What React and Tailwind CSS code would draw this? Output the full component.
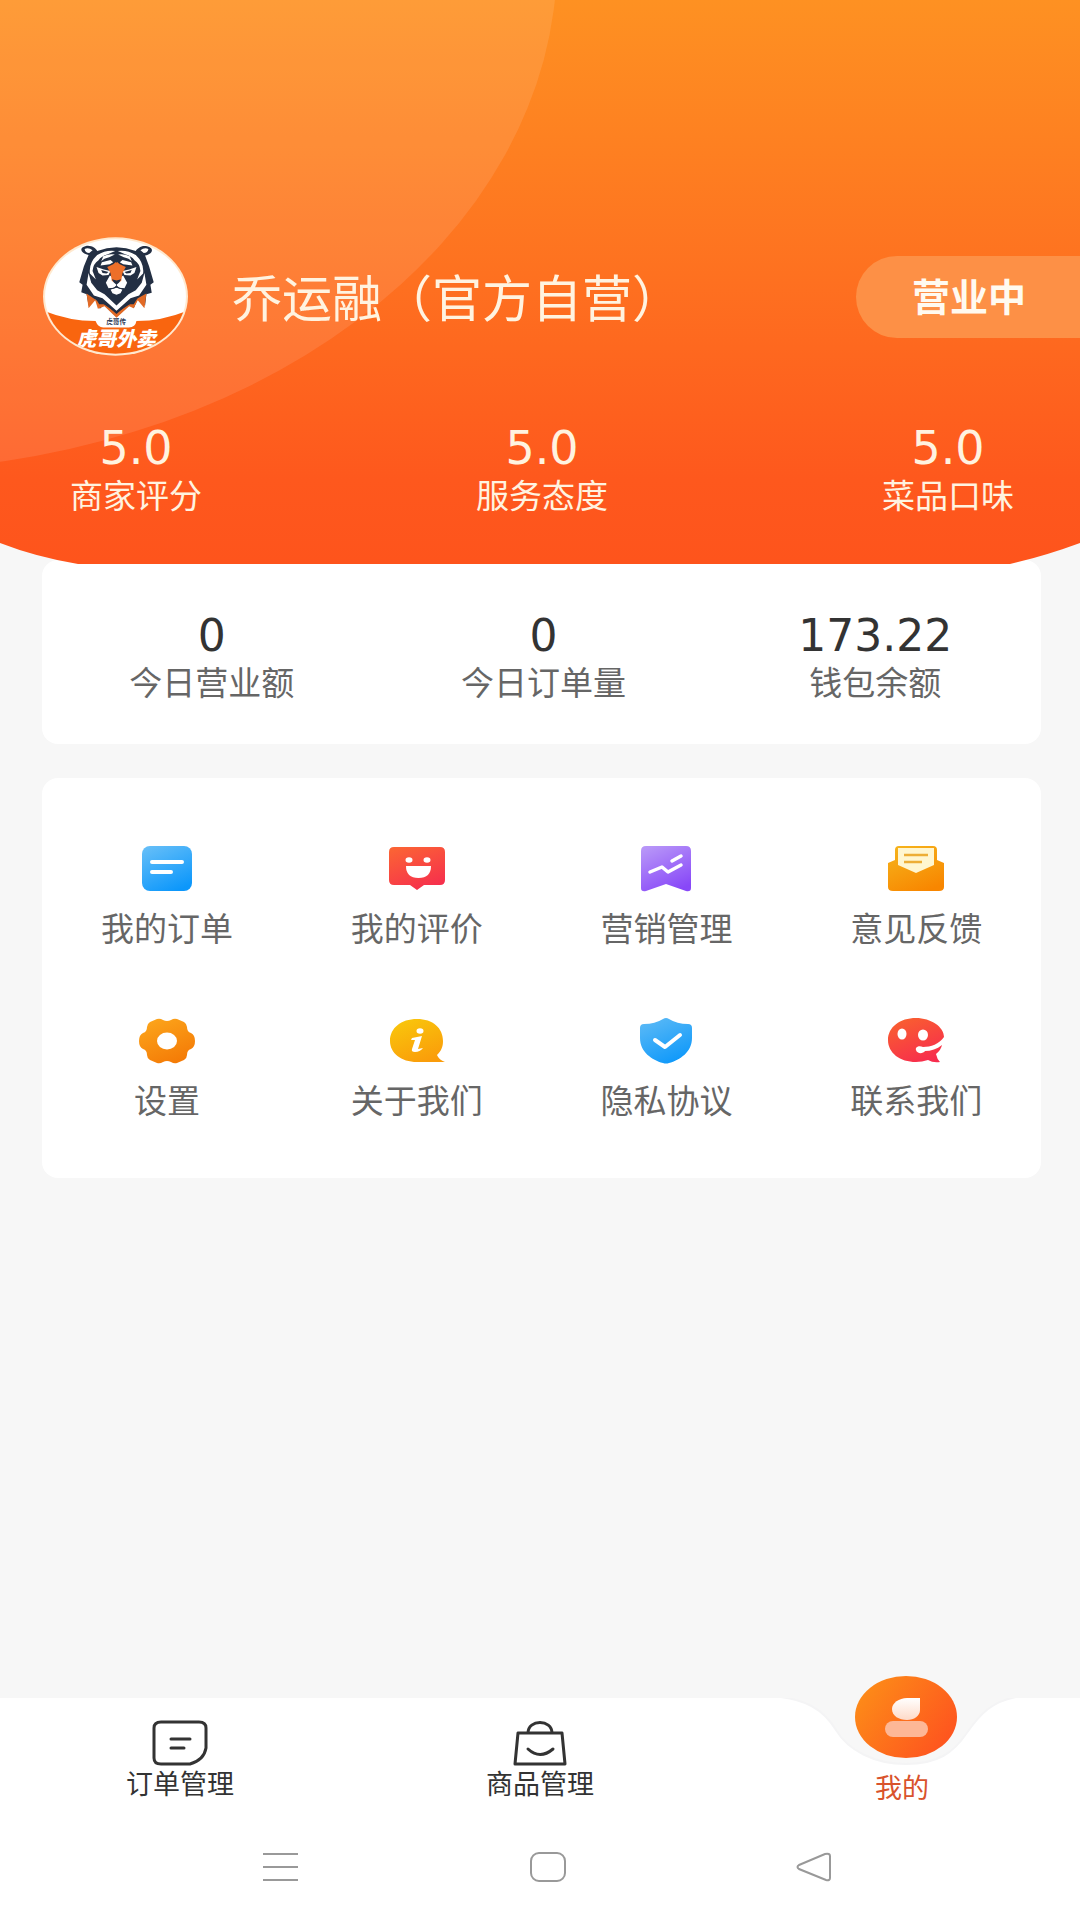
import React, { useState } from "react";

const scores = [
  { label: "商家评分", value: "5.0" },
  { label: "服务态度", value: "5.0" },
  { label: "菜品口味", value: "5.0" },
];

const stats = [
  { label: "今日营业额", value: "0" },
  { label: "今日订单量", value: "0" },
  { label: "钱包余额", value: "173.22" },
];

function Gradient({ id, from, to }) {
  return (
    <defs>
      <linearGradient id={id} x1="0.2" y1="0" x2="0.7" y2="1">
        <stop offset="0" stopColor={from} />
        <stop offset="1" stopColor={to} />
      </linearGradient>
    </defs>
  );
}

function Icon({ children }) {
  return (
    <svg viewBox="0 0 56 46" className="w-14 h-[46px]" aria-hidden="true">
      {children}
    </svg>
  );
}

function OrdersIcon() {
  return (
    <Icon>
      <Gradient id="orders" from="#62bdf8" to="#0c97fb" />
      <rect x="3" y="0" width="50" height="45" rx="8" fill="url(#orders)" />
      <path d="M13 16H43M13 26H32" stroke="#fff" strokeWidth="4" strokeLinecap="round" />
    </Icon>
  );
}

function ReviewIcon() {
  return (
    <Icon>
      <Gradient id="review" from="#fb6235" to="#f62f4d" />
      <path
        d="M5 1H51Q56 1 56 6V34Q56 39 51 39H35L28 44L21 39H5Q0 39 0 34V6Q0 1 5 1Z"
        fill="url(#review)"
      />
      <ellipse cx="20" cy="14" rx="3.5" ry="2.8" fill="#fff" />
      <ellipse cx="38" cy="14" rx="3.5" ry="2.8" fill="#fff" />
      <path d="M17 20H42Q42 32 29.500 32Q17 32 17 20Z" fill="#fff" />
    </Icon>
  );
}

function MarketingIcon() {
  return (
    <Icon>
      <Gradient id="marketing" from="#b795f8" to="#8848f8" />
      <path
        d="M8 0H48Q53 0 53 5V42Q53 46 48 45L28 38L8 45Q3 46 3 42V5Q3 0 8 0Z"
        fill="url(#marketing)"
      />
      <path
        d="M12 26L24 21L30 26L43 19M34 15L43 10"
        fill="none"
        stroke="#fff"
        strokeWidth="3.500"
        strokeLinecap="round"
        strokeLinejoin="round"
      />
    </Icon>
  );
}

function FeedbackIcon() {
  return (
    <Icon>
      <Gradient id="feedback" from="#f6b21a" to="#f88600" />
      <path d="M7 14V4Q7 0 11 0H45Q49 0 49 4V14L56 17V41Q56 45 51 45H5Q0 45 0 41V17Z" fill="url(#feedback)" />
      <path d="M10 2H46V19L28 27L10 19Z" fill="#fff6d0" />
      <path d="M16 9H40M16 16H34" stroke="#edae36" strokeWidth="2.500" />
    </Icon>
  );
}

function SettingsIcon() {
  return (
    <Icon>
      <Gradient id="settings" from="#fca51b" to="#f47a06" />
      <path
        d="M18 1Q21 0 24 2Q28 4 32 2Q35 0 38 1L45 4Q48 6 48 9Q48 14 52 15Q56 17 56 23Q56 29 52 31Q48 32 48 37Q48 40 45 42L38 45Q35 46 32 44Q28 42 24 44Q21 46 18 45L11 42Q8 40 8 37Q8 32 4 31Q0 29 0 23Q0 17 4 15Q8 14 8 9Q8 6 11 4Z"
        fill="url(#settings)"
      />
      <ellipse cx="28" cy="23" rx="10" ry="8.500" fill="#fff" />
    </Icon>
  );
}

function AboutIcon() {
  return (
    <Icon>
      <Gradient id="about" from="#f9c60c" to="#fa9c0a" />
      <path
        d="M28 1C44 1 54 10 54 23C54 29 52 33 48 37Q50 42 56 44H28C12 44 1 35 1 23C1 10 12 1 28 1Z"
        fill="url(#about)"
      />
      <ellipse cx="31" cy="13" rx="3.500" ry="2.800" fill="#fff" />
      <path d="M23 20L33 18L29 31L34 30Q31 34 26 34Q22 34 23 31L26 22L22 22Z" fill="#fff" />
    </Icon>
  );
}

function PrivacyIcon() {
  return (
    <Icon>
      <Gradient id="privacy" from="#5ab9f6" to="#0d98fa" />
      <path
        d="M25 1Q28 -1 31 1Q39 6 50 6Q54 6 54 10V20C54 34 42 42 31 45Q28 46 25 45C14 42 2 34 2 20V10Q2 6 6 6Q17 6 25 1Z"
        fill="url(#privacy)"
      />
      <path
        d="M17 22L27 29L42 17"
        fill="none"
        stroke="#fff"
        strokeWidth="4"
        strokeLinecap="round"
        strokeLinejoin="round"
      />
    </Icon>
  );
}

function ContactIcon() {
  return (
    <Icon>
      <Gradient id="contact" from="#f9602f" to="#f72c4d" />
      <path
        d="M28 0C43 0 56 9 56 19C51 26 43 29 35 29C31 27 27 29 28 32C29 36 35 36 37 33C43 33 49 31 54 27Q53 32 48 36Q49 41 52 44Q45 45 40 42Q34 44 28 44C12 44 0 35 0 22C0 9 12 0 28 0Z"
        fill="url(#contact)"
      />
      <ellipse cx="14" cy="16" rx="4.500" ry="5.500" fill="#fff" />
      <ellipse cx="35" cy="17" rx="5" ry="5.500" fill="#fff" />
    </Icon>
  );
}

const menu = [
  { label: "我的订单", icon: OrdersIcon },
  { label: "我的评价", icon: ReviewIcon },
  { label: "营销管理", icon: MarketingIcon },
  { label: "意见反馈", icon: FeedbackIcon },
  { label: "设置", icon: SettingsIcon },
  { label: "关于我们", icon: AboutIcon },
  { label: "隐私协议", icon: PrivacyIcon },
  { label: "联系我们", icon: ContactIcon },
];

function ShopLogo() {
  return (
    <svg viewBox="65 50 440 358" className="w-[147px] h-[119px] shrink-0" role="img" aria-label="虎哥外卖">
      <defs>
        <clipPath id="logoClip">
          <ellipse cx="285" cy="229" rx="212" ry="172" />
        </clipPath>
      </defs>
      <ellipse cx="285" cy="229" rx="218" ry="178" fill="#ffe9cf" />
      <g clipPath="url(#logoClip)">
        <rect x="65" y="50" width="440" height="358" fill="#fff" />
        <path d="M65 270Q140 302 225 303Q232 322 248 322H325Q345 322 348 303Q430 302 505 270V408H65Z" fill="#f9650f" />
        <text x="287" y="313" textAnchor="middle" fontSize="20" fontWeight="700" fill="#33415a">
          虎哥传
        </text>
        <text x="287" y="378" textAnchor="middle" fontSize="60" fontWeight="900" fontStyle="italic" fill="#fff">
          虎哥外卖
        </text>
      </g>
      <g transform="translate(138 60)">
        <path
          d="M66 44C44 40 34 22 58 17C76 14 88 25 92 32Q150 10 208 32C213 24 225 14 242 18C266 24 258 42 236 46L248 78L262 126L252 134L256 158L240 162L236 196L214 176L202 204L190 194L150 231L112 194L100 206L86 178L66 196L60 162L44 156L48 134L38 126L52 78Z"
          fill="#232f43"
        />
        <path
          d="M60 160L86 178L112 192L150 218L190 192L214 174L240 160L234 204L214 180L202 204L188 198L150 233L114 198L94 206L86 180L66 204Z"
          fill="#e26a25"
        />
        <path d="M82 166L108 176L150 216L192 176L218 166L202 192L184 192L150 222L116 192L98 192Z" fill="#232f43" />
        <path d="M54 26Q66 20 78 30L68 38Q56 38 54 26ZM246 26Q234 20 222 30L232 38Q244 38 246 26Z" fill="#fff" />
        <path
          d="M92 44Q118 28 146 32L124 42Q104 48 96 60Q80 70 78 92L88 118L70 100Q66 68 92 44ZM208 44Q182 28 154 32L176 42Q196 48 204 60Q220 70 222 92L212 118L230 100Q234 68 208 44Z"
          fill="#fff"
        />
        <path
          d="M66 98L74 128L92 150L114 162L150 196L186 162L208 150L226 128L234 98L240 134L218 166L192 174L150 212L108 174L82 166L60 134Z"
          fill="#fff"
        />
        <path
          d="M110 48Q128 40 145 43L128 51Q112 54 104 64ZM190 48Q172 40 155 43L172 51Q188 54 196 64ZM106 66L132 59L140 66L130 72L102 76ZM194 66L168 59L160 66L170 72L198 76Z"
          fill="#fff"
        />
        <path d="M90 80L112 88L132 92L126 104L108 106L96 98ZM210 80L188 88L168 92L174 104L192 106L204 98Z" fill="#fff" />
        <path d="M104 89L126 95L120 100L108 98ZM196 89L174 95L180 100L192 98Z" fill="#232f43" />
        <path
          d="M130 106L140 112L150 130L160 112L170 106L182 128L174 144L158 143L150 135L142 143L126 144L118 128ZM132 148L150 143L168 148L162 159L150 164L138 159Z"
          fill="#fff"
        />
        <path d="M150 64L160 72L178 80L168 98L164 122L150 129L136 122L132 98L122 80L140 72Z" fill="#ed6f29" />
        <path d="M136 117L150 121L164 117L158 127L151 133V142H149V133L142 127ZM149 44H151L154 61L150 68L146 61Z" fill="#232f43" />
        <path d="M126 147Q140 146 150 140Q160 146 174 147" fill="none" stroke="#232f43" strokeWidth="3" />
      </g>
    </svg>
  );
}

function HeaderBackground() {
  return (
    <svg
      viewBox="0 0 1080 564"
      preserveAspectRatio="none"
      className="absolute inset-0 w-full h-full"
      aria-hidden="true"
    >
      <defs>
        <linearGradient id="headerFill" x1="0" y1="0" x2="0" y2="1">
          <stop offset="0" stopColor="#fe9122" />
          <stop offset="0.5" stopColor="#fe7020" />
          <stop offset="0.85" stopColor="#fe581d" />
          <stop offset="1" stopColor="#fe541c" />
        </linearGradient>
      </defs>
      <path d="M0 0H1080V543Q1045 556 1010 564H78Q36 557 0 543Z" fill="url(#headerFill)" />
      <ellipse cx="-130" cy="-40" rx="687" ry="511" fill="#fff" fillOpacity="0.1" />
    </svg>
  );
}

function Header() {
  return (
    <header className="relative z-10 pt-[237px] pb-[50px] text-[#fff3e0]">
      <HeaderBackground />
      <div className="relative flex items-center pl-[42px]">
        <ShopLogo />
        <h1 className="ml-[43px] pb-1 text-[50px] leading-[60px]">乔运融（官方自营）</h1>
        <button className="ml-auto h-[82px] rounded-l-full bg-[#fd9046] pl-14 pr-[54px] pb-1 text-[38px] font-bold text-[#fffaf0]">
          营业中
        </button>
      </div>
      <div className="relative mt-[66px] flex justify-between pl-[70px] pr-[66px]">
        {scores.map((score) => (
          <div key={score.label} className="flex flex-col items-center">
            <span className="font-['DejaVu_Sans'] text-[46px] leading-[52px]">{score.value}</span>
            <span className="text-[33px] leading-[40px]">{score.label}</span>
          </div>
        ))}
      </div>
    </header>
  );
}

function OrderTabIcon() {
  return (
    <svg viewBox="0 0 56 46" className="w-14 h-[46px]" fill="none" stroke="#333" strokeWidth="3" aria-hidden="true">
      <path d="M9 2H47Q54 2 54 8V28Q52 40 38 44H9Q2 44 2 38V8Q2 2 9 2Z" />
      <path d="M19 19H38M19 28H32" strokeLinecap="round" />
    </svg>
  );
}

function GoodsTabIcon() {
  return (
    <svg viewBox="0 0 56 46" className="w-14 h-[46px]" fill="none" stroke="#333" strokeWidth="3" aria-hidden="true">
      <path d="M6 13H50L53 44H3Z" strokeLinejoin="round" />
      <path d="M16 13C16 -1 40 -1 40 13" />
      <path d="M16 29Q28 40 41 29" strokeLinecap="round" />
    </svg>
  );
}

function MineTabIcon() {
  return (
    <svg viewBox="0 0 102 82" className="w-[102px] h-[82px]" aria-hidden="true">
      <defs>
        <linearGradient id="mine" x1="0" y1="0.2" x2="1" y2="0.8">
          <stop offset="0" stopColor="#fd8d18" />
          <stop offset="1" stopColor="#fe511f" />
        </linearGradient>
        <linearGradient id="mineHead" x1="0" y1="0" x2="0" y2="1">
          <stop offset="0" stopColor="#fff" />
          <stop offset="1" stopColor="#fedac8" />
        </linearGradient>
      </defs>
      <ellipse cx="51" cy="41" rx="51" ry="41" fill="url(#mine)" />
      <rect x="30" y="45" width="43" height="16" rx="8" fill="#fdb796" />
      <path d="M52 22H65V34C65 40 59 44 52 44C44 44 37 40 37 33C37 27 44 22 52 22Z" fill="url(#mineHead)" />
    </svg>
  );
}

function TabBar() {
  const [active, setActive] = useState("mine");

  return (
    <nav className="grid grid-cols-3 bg-white text-[27px] leading-[32px] text-[#333]">
      <button className="flex flex-col items-center pt-[22px] gap-px" onClick={() => setActive("orders")}>
        <OrderTabIcon />
        订单管理
      </button>
      <button className="flex flex-col items-center pt-[22px] gap-px" onClick={() => setActive("goods")}>
        <GoodsTabIcon />
        商品管理
      </button>
      <button
        className="relative flex flex-col items-center pt-[73px] pl-1 text-[#d9532c]"
        aria-current={active === "mine" ? "page" : undefined}
        onClick={() => setActive("mine")}
      >
        {/* notch cut in the bar under the raised tab */}
        <svg
          viewBox="0 0 260 72"
          className="absolute left-1/2 top-0 w-[260px] h-[72px] -translate-x-1/2"
          aria-hidden="true"
        >
          <path
            d="M0 -2C36 0 54 12 66 32C78 52 104 66 136 66C168 66 184 54 196 36C210 16 222 2 252 -2Z"
            fill="#f7f7f7"
            stroke="#f4f4f5"
            strokeWidth="2"
          />
        </svg>
        <span className="absolute left-1/2 -top-[22px] ml-1.5 -translate-x-1/2">
          <MineTabIcon />
        </span>
        <span className="relative">我的</span>
      </button>
    </nav>
  );
}

function SystemBar() {
  return (
    <div className="flex justify-between bg-white pl-[263px] pr-[248px] pt-[49px] pb-[38px]">
      <button aria-label="菜单">
        <svg viewBox="0 0 36 30" className="w-9 h-[30px]" stroke="#999" strokeWidth="2" aria-hidden="true">
          <path d="M0 2H35M0 15H35M0 28H35" />
        </svg>
      </button>
      <button aria-label="主页">
        <svg viewBox="0 0 36 30" className="w-9 h-[30px]" fill="none" stroke="#999" strokeWidth="2" aria-hidden="true">
          <rect x="1" y="1" width="34" height="28" rx="8" />
        </svg>
      </button>
      <button aria-label="返回">
        <svg viewBox="0 0 36 30" className="w-9 h-[30px]" fill="none" stroke="#999" strokeWidth="2" aria-hidden="true">
          <path d="M3 13L29 2Q34 1 34 4V26Q34 29 30 28L3 17Q0 15 3 13Z" />
        </svg>
      </button>
    </div>
  );
}

function App() {
  return (
    <div className="flex min-h-screen w-full flex-col bg-[#f7f7f7] font-['Noto_Sans_CJK_SC',sans-serif]">
      <Header />
      <main className="flex-1 pl-[42px] pr-[39px]">
        <section className="-mt-1 grid grid-cols-3 rounded-2xl bg-white pt-[50px] pb-[44px] pl-1">
          {stats.map((stat) => (
            <div key={stat.label} className="flex flex-col items-center">
              <span className="font-['DejaVu_Sans'] text-[44px] leading-[52px] text-[#333]">{stat.value}</span>
              <span className="text-[33px] leading-[38px] text-[#666]">{stat.label}</span>
            </div>
          ))}
        </section>
        <section className="mt-[34px] grid grid-cols-4 gap-y-[72px] rounded-2xl bg-white pt-[68px] pb-[60px]">
          {menu.map(({ label, icon: MenuIcon }) => (
            <button key={label} className="flex flex-col items-center gap-4">
              <MenuIcon />
              <span className="text-[33px] leading-[38px] text-[#666]">{label}</span>
            </button>
          ))}
        </section>
      </main>
      <TabBar />
      <SystemBar />
    </div>
  );
}

export default App;
